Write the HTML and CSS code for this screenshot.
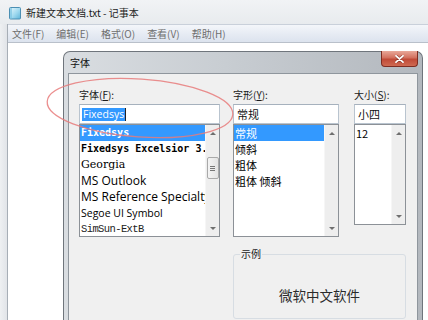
FILE: index.html
```html
<!DOCTYPE html>
<html lang="zh-CN">
<head>
<meta charset="utf-8">
<title>记事本</title>
<link rel="stylesheet" href="styles.css">
</head>
<body>
<div class="window">
  <div class="titlebar">
    <svg class="app-icon" width="14" height="14" viewBox="0 0 14 14">
      <defs>
        <linearGradient id="pg" x1="0" y1="0" x2="1" y2="1">
          <stop offset="0" stop-color="#e9f8fd"/>
          <stop offset="0.55" stop-color="#9fd9ef"/>
          <stop offset="1" stop-color="#5cb3d8"/>
        </linearGradient>
      </defs>
      <rect x="1.5" y="1.5" width="11" height="11.5" rx="1" fill="url(#pg)" stroke="#4b8fb3"/>
      <rect x="2" y="2" width="2" height="10.5" fill="#7cc4e3" opacity="0.7"/>
    </svg>
    <span class="title-text">新建文本文档.txt - 记事本</span>
  </div>
  <div class="frame">
    <div class="frame-left"></div>
    <div class="inner">
      <div class="menubar">
        <span class="menu">文件(F)</span>
        <span class="menu">编辑(E)</span>
        <span class="menu">格式(O)</span>
        <span class="menu">查看(V)</span>
        <span class="menu">帮助(H)</span>
      </div>
      <div class="editor"></div>
    </div>
  </div>
</div>

<div class="dialog">
  <div class="dlg-title">字体</div>
  <div class="close-btn">
    <svg width="9" height="8" viewBox="0 0 9 8">
      <path d="M1 0.8 L8 7.2 M8 0.8 L1 7.2" stroke="#5a1a12" stroke-width="3" stroke-linecap="round" opacity="0.5"/>
      <path d="M1 0.8 L8 7.2 M8 0.8 L1 7.2" stroke="#ffffff" stroke-width="1.8" stroke-linecap="round"/>
    </svg>
  </div>
  <div class="dlg-client">
    <div class="col col-font">
      <div class="label">字体(<u>F</u>):</div>
      <div class="edit"><span class="sel-text">Fixedsys</span><span class="caret"></span></div>
      <div class="listbox lb-font">
        <div class="items">
          <div class="row sel f-fixed">Fixedsys</div>
          <div class="row f-fixed">Fixedsys Excelsior 3.01</div>
          <div class="row f-georgia">Georgia</div>
          <div class="row f-sans">MS Outlook</div>
          <div class="row f-sans">MS Reference Specialty</div>
          <div class="row f-segoe">Segoe UI Symbol</div>
          <div class="row f-simsun">SimSun-ExtB</div>
        </div>
        <div class="sb">
          <div class="sb-btn"><span class="arr-up"></span></div>
          <div class="sb-thumb"><span class="grip"></span></div>
          <div class="sb-btn sb-bottom"><span class="arr-down"></span></div>
        </div>
      </div>
    </div>
    <div class="col col-style">
      <div class="label">字形(<u>Y</u>):</div>
      <div class="edit"><span class="edit-text">常规</span></div>
      <div class="listbox lb-style">
        <div class="items cjk">
          <div class="row sel">常规</div>
          <div class="row">倾斜</div>
          <div class="row">粗体</div>
          <div class="row">粗体 倾斜</div>
        </div>
        <div class="sb">
          <div class="sb-btn"><span class="arr-up"></span></div>
          <div class="sb-btn sb-bottom"><span class="arr-down"></span></div>
        </div>
      </div>
    </div>
    <div class="col col-size">
      <div class="label">大小(<u>S</u>):</div>
      <div class="edit"><span class="edit-text">小四</span></div>
      <div class="listbox lb-size">
        <div class="items cjk">
          <div class="row">12</div>
        </div>
        <div class="sb">
          <div class="sb-btn"><span class="arr-up"></span></div>
          <div class="sb-btn sb-bottom"><span class="arr-down"></span></div>
        </div>
      </div>
    </div>
    <fieldset class="sample">
      <legend>示例</legend>
      <div class="sample-text">微软中文软件</div>
    </fieldset>
  </div>
</div>

<svg class="annotation" width="428" height="320" viewBox="0 0 428 320">
  <ellipse cx="140" cy="108" rx="93" ry="29" transform="rotate(4 140 108)" fill="none" stroke="#e77b7b" stroke-width="1.3" opacity="0.85"/>
</svg>
</body>
</html>
```

FILE: styles.css
```css
* { box-sizing: border-box; }
html, body { margin: 0; padding: 0; }
body {
  width: 428px;
  height: 320px;
  overflow: hidden;
  position: relative;
  background: #ffffff;
  font-family: "Noto Sans CJK SC", "Noto Sans", sans-serif;
}

/* notepad window */
.window { width: 428px; height: 320px; display: flex; flex-direction: column; }
.titlebar {
  height: 24px;
  flex: none;
  display: flex;
  align-items: center;
  padding: 1px 0 0 8px;
  gap: 4px;
  background: linear-gradient(180deg, #f1f3f5 0%, #e8ebee 100%);
}
.app-icon { flex: none; }
.title-text { font-size: 10px; color: #1b1b1b; line-height: 12px; }

.frame { flex: 1; display: flex; min-height: 0; }
.frame-left {
  width: 8px;
  flex: none;
  background: linear-gradient(90deg, #eef0f2, #e1e4e8);
  border-right: 1px solid #a7aeb6;
}
.inner { flex: 1; display: flex; flex-direction: column; }
.menubar {
  height: 19px;
  flex: none;
  display: flex;
  align-items: center;
  gap: 12px;
  padding-left: 4px;
  background: linear-gradient(180deg, #f4f6fa 0%, #e6ebf3 55%, #dce3ee 100%);
  border-top: 1px solid #c9d0da;
  border-bottom: 1px solid #b9c0ca;
}
.menu { font-size: 10px; color: #6e6e6e; line-height: 12px; }
.editor { flex: 1; background: #ffffff; }

/* font dialog */
.dialog {
  position: absolute;
  left: 63px;
  top: 51px;
  width: 360px;
  height: 269px;
  border: 1px solid #6f757c;
  border-bottom: none;
  border-radius: 7px 7px 0 0;
  background: linear-gradient(90deg, #d9dde1 0%, #c8cdd2 45%, #b3b8be 100%);
  padding: 0 4px;
  display: flex;
  flex-direction: column;
}
.dlg-title {
  height: 21px;
  flex: none;
  font-size: 10px;
  line-height: 12px;
  color: #111;
  padding: 5px 0 0 2px;
}
.close-btn {
  position: absolute;
  top: -1px;
  right: 4px;
  width: 37px;
  height: 16px;
  border: 1px solid #7e2d22;
  border-top: none;
  border-radius: 0 0 4px 4px;
  background: linear-gradient(180deg, #e9a899 0%, #d2705e 45%, #c04a37 55%, #cf6a52 100%);
  display: flex;
  align-items: center;
  justify-content: center;
}
.dlg-client {
  flex: 1;
  min-height: 0;
  background: #f0f0f0;
  border: 1px solid #8f969d;
  border-bottom: none;
  display: grid;
  grid-template-columns: 141px 13px 106px 15px 52px;
  grid-template-rows: auto auto;
  align-content: start;
  padding: 14px 0 0 10px;
}
.col { display: flex; flex-direction: column; }
.col-font { grid-column: 1; }
.col-style { grid-column: 3; }
.col-size { grid-column: 5; }
.label {
  font-size: 10px;
  line-height: 14px;
  height: 14px;
  color: #1a1a1a;
  margin-bottom: 2px;
}
.label u { text-decoration-thickness: 1px; text-underline-offset: 1px; }
.edit {
  height: 20px;
  background: #fff;
  border: 1px solid #b9c4cf;
  border-top-color: #a6b1bd;
  display: flex;
  align-items: center;
  padding-left: 2px;
}
.sel-text {
  background: #3399ff;
  color: #fff;
  font-family: "Open Sans", sans-serif;
  font-size: 10.5px;
  line-height: 13px;
  padding: 0 1px;
}
.caret { width: 1px; height: 13px; background: #222; }
.edit-text { font-size: 11px; line-height: 14px; color: #111; padding-left: 1px; }

.listbox {
  background: #fff;
  border: 1px solid #8c9197;
  display: flex;
}
.lb-font { height: 113px; }
.lb-style { height: 113px; }
.lb-size { height: 101px; }
.items { flex: 1; min-width: 0; overflow: hidden; }
.row {
  height: 16px;
  line-height: 16px;
  padding-left: 1px;
  white-space: nowrap;
  overflow: hidden;
  color: #000;
}
.row.sel { background: #3399ff; color: #fff; }
.cjk .row { font-size: 11px; }
.f-fixed { font-family: "DejaVu Sans Mono", monospace; font-weight: bold; font-size: 10px; }
.f-georgia { font-family: "DejaVu Serif", serif; font-size: 11px; }
.f-sans { font-family: "Open Sans", sans-serif; font-size: 12px; }
.f-segoe { font-family: "Open Sans", sans-serif; font-size: 10.5px; }
.f-simsun { font-family: "Liberation Mono", monospace; font-size: 10.5px; letter-spacing: -0.6px; color: #222; }

.sb {
  width: 14px;
  flex: none;
  background: #eeeeee;
  border-left: 1px solid #f6f6f6;
  display: flex;
  flex-direction: column;
  align-items: center;
}
.sb-btn { height: 16px; width: 100%; display: flex; align-items: center; justify-content: center; }
.sb-bottom { margin-top: auto; }
.arr-up, .arr-down { width: 0; height: 0; border-left: 3px solid transparent; border-right: 3px solid transparent; }
.arr-up { border-bottom: 3px solid #6f6f6f; }
.arr-down { border-top: 3px solid #6f6f6f; }
.sb-thumb {
  margin-top: 16px;
  width: 12px;
  height: 22px;
  border: 1px solid #a9a9a9;
  border-radius: 2px;
  background: linear-gradient(90deg, #f4f4f4, #e3e3e3);
  display: flex;
  align-items: center;
  justify-content: center;
}
.grip {
  width: 5px;
  height: 5px;
  border-top: 1px solid #777;
  border-bottom: 1px solid #777;
  background: linear-gradient(#777, #777) center / 5px 1px no-repeat;
}

.sample {
  grid-column: 3 / 6;
  margin: 11px 0 0 0;
  height: 71px;
  border: 1px solid #d7dde3;
  border-radius: 3px;
  padding: 0;
  min-width: 0;
  display: flex;
  align-items: center;
  justify-content: center;
}
.sample legend {
  font-size: 10px;
  line-height: 12px;
  color: #1a1a1a;
  padding: 0 1px;
  margin-left: 6px;
}
.sample-text {
  font-size: 13.5px;
  color: #2a2a2a;
  text-align: center;
  padding-top: 11px;
  width: 100%;
}

.annotation { position: absolute; left: 0; top: 0; pointer-events: none; }
```
